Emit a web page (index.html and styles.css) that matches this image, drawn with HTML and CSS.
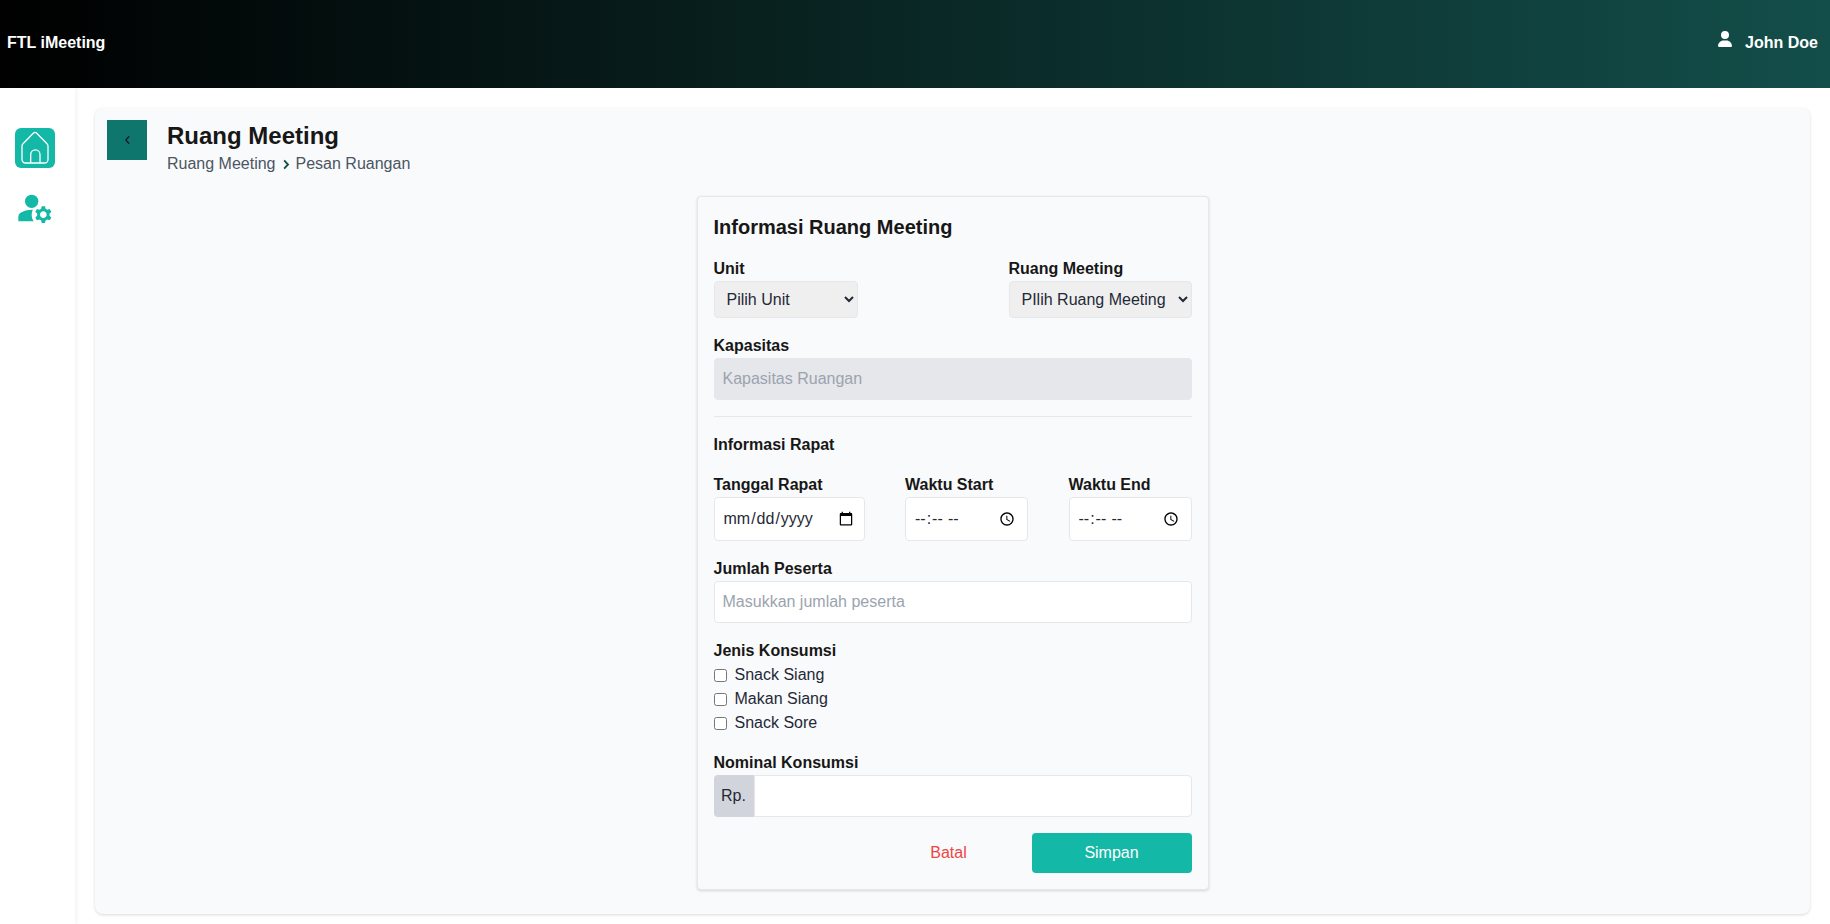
FILE: index.html
```html
<!DOCTYPE html>
<html lang="id">
<head>
    <meta charset="UTF-8">
    <meta name="viewport" content="width=device-width, initial-scale=1.0">
    <title>FTL iMeeting</title>
    <link rel="stylesheet" href="styles.css">
</head>
<body>
    <header class="topbar">
        <div class="brand">FTL iMeeting</div>
        <div class="user">
            <svg class="user-icon" viewBox="0 0 448 512"><path fill="currentColor" d="M224 256A128 128 0 1 0 224 0a128 128 0 1 0 0 256zm-45.7 48C79.8 304 0 383.8 0 482.3C0 498.7 13.3 512 29.7 512H418.3c16.4 0 29.7-13.3 29.7-29.7C448 383.8 368.2 304 269.7 304H178.3z"/></svg>
            <span>John Doe</span>
        </div>
    </header>

    <div class="layout">
        <nav class="sidebar">
            <a class="nav-home" href="#">
                <svg viewBox="0 0 40 40" width="40" height="40" fill="none" stroke="#fff" stroke-width="1.3"><path d="M10.5 35H29.5a3.5 3.5 0 0 0 3.5-3.5V18a3 3 0 0 0-1-2.2L21.5 5a2 2 0 0 0-3 0L8 15.8a3 3 0 0 0-1 2.2V31.5a3.5 3.5 0 0 0 3.5 3.5z"/><path d="M15.7 35V26.5a4.6 4.6 0 0 1 9.3 0V35"/></svg>
            </a>
            <a class="nav-admin" href="#">
                <svg viewBox="0 0 24 24" width="40" height="40"><g fill="currentColor"><circle cx="10" cy="8" r="4"/><path d="M10.67 13.02c-.22-.01-.44-.02-.67-.02-2.42 0-4.68.67-6.61 1.82-.88.52-1.39 1.5-1.39 2.53V20h9.26c-.79-1.13-1.26-2.51-1.26-4 0-1.07.25-2.07.67-2.98z"/><path d="M20.75 16c0-.22-.03-.42-.06-.63l1.14-1.01-1-1.73-1.45.49c-.32-.27-.68-.48-1.08-.63L18 11h-2l-.3 1.49c-.4.15-.76.36-1.08.63l-1.45-.49-1 1.73 1.14 1.01c-.03.21-.06.41-.06.63s.03.42.06.63l-1.14 1.01 1 1.73 1.45-.49c.32.27.68.48 1.08.63L16 21h2l.3-1.49c.4-.15.76-.36 1.08-.63l1.45.49 1-1.73-1.14-1.01c.03-.21.06-.41.06-.63zM17 18c-1.1 0-2-.9-2-2s.9-2 2-2 2 .9 2 2-.9 2-2 2z"/></g></svg>
            </a>
        </nav>

        <main class="content">
            <div class="page-head">
                <a class="back-btn" href="#">
                    <svg viewBox="0 0 8 12" width="7" height="10" fill="none" stroke="#111827" stroke-width="1.5"><path d="M6 1.5 2 6l4 4.5"/></svg>
                </a>
                <div>
                    <h1 class="page-title">Ruang Meeting</h1>
                    <div class="breadcrumb">
                        <span>Ruang Meeting</span>
                        <svg class="crumb-sep" viewBox="0 0 8 12" width="8" height="11" fill="none" stroke="#134e4a" stroke-width="2"><path d="M2 1.5 6.2 6 2 10.5"/></svg>
                        <span>Pesan Ruangan</span>
                    </div>
                </div>
            </div>

            <form class="form-card">
                <h2 class="form-title">Informasi Ruang Meeting</h2>

                <div class="row-between field">
                    <div>
                        <label for="unit">Unit</label>
                        <select id="unit" class="select select-unit">
                            <option>Pilih Unit</option>
                        </select>
                    </div>
                    <div>
                        <label for="ruang">Ruang Meeting</label>
                        <select id="ruang" class="select select-room">
                            <option>PIlih Ruang Meeting</option>
                        </select>
                    </div>
                </div>

                <label for="kapasitas">Kapasitas</label>
                <input id="kapasitas" class="input input-disabled" type="text" placeholder="Kapasitas Ruangan" disabled>

                <hr class="divider">

                <div class="section-title">Informasi Rapat</div>

                <div class="row-between field">
                    <div>
                        <label for="tanggal">Tanggal Rapat</label>
                        <input id="tanggal" class="input input-date" type="date">
                    </div>
                    <div>
                        <label for="start">Waktu Start</label>
                        <input id="start" class="input input-time" type="time">
                    </div>
                    <div>
                        <label for="end">Waktu End</label>
                        <input id="end" class="input input-time" type="time">
                    </div>
                </div>

                <div class="field">
                    <label for="jumlah">Jumlah Peserta</label>
                    <input id="jumlah" class="input" type="text" placeholder="Masukkan jumlah peserta">
                </div>

                <div class="field checks">
                    <label>Jenis Konsumsi</label>
                    <div class="check-row"><input id="k1" type="checkbox"><span>Snack Siang</span></div>
                    <div class="check-row"><input id="k2" type="checkbox"><span>Makan Siang</span></div>
                    <div class="check-row"><input id="k3" type="checkbox"><span>Snack Sore</span></div>
                </div>

                <label for="nominal">Nominal Konsumsi</label>
                <div class="input-group">
                    <span class="addon">Rp.</span>
                    <input id="nominal" class="input" type="text">
                </div>

                <div class="actions">
                    <button type="button" class="btn btn-cancel">Batal</button>
                    <button type="submit" class="btn btn-save">Simpan</button>
                </div>
            </form>
        </main>
    </div>
</body>
</html>
```

FILE: styles.css
```css
* {
    box-sizing: border-box;
}
html, body {
    height: 100%;
}
body {
    margin: 0;
    display: flex;
    flex-direction: column;
    overflow: hidden;
    font-family: "Liberation Sans", Arial, sans-serif;
    font-size: 16px;
    line-height: 24px;
    color: #1f2937;
    background-color: #fff;
}
.topbar {
    flex: none;
    height: 88px;
    padding: 0 12px 2px 7px;
    display: flex;
    align-items: center;
    justify-content: space-between;
    color: #fff;
    font-weight: bold;
    background: linear-gradient(to right, #000, #134e4a);
}
.user {
    display: flex;
    align-items: center;
    gap: 13px;
}
.user-icon {
    width: 14px;
    height: 16px;
    margin-top: -9px;
}
.layout {
    flex: 1;
    display: flex;
    min-height: 0;
}
.sidebar {
    flex: none;
    width: 75px;
    padding: 40px 5px 0 0;
    display: flex;
    flex-direction: column;
    align-items: center;
    box-shadow: 2px 0 4px rgba(0, 0, 0, 0.05);
}
.nav-home {
    width: 40px;
    height: 40px;
    display: block;
    border-radius: 6px;
    background-color: #14b8a6;
}
.nav-home svg {
    display: block;
}
.nav-admin {
    margin-top: 20px;
    display: block;
    color: #14b8a6;
}
.nav-admin svg {
    display: block;
}
.content {
    flex: 1;
    margin: 20px 20px 10px 20px;
    padding: 12px;
    border-radius: 8px;
    background-color: #f9fafb;
    box-shadow: 0 1px 3px rgba(0, 0, 0, 0.15);
}
.page-head {
    display: flex;
    gap: 20px;
    align-items: flex-start;
}
.back-btn {
    width: 40px;
    height: 40px;
    display: flex;
    align-items: center;
    justify-content: center;
    background-color: #0f766e;
}
.page-title {
    margin: 0;
    font-size: 24px;
    line-height: 32px;
    font-weight: bold;
    color: #171717;
}
.breadcrumb {
    display: flex;
    align-items: center;
    color: #4b5563;
}
.crumb-sep {
    margin: 0 6px;
}
.form-card {
    width: 512px;
    margin: 20px auto 0;
    padding: 16px;
    border: 1px solid #e5e7eb;
    border-radius: 4px;
    background-color: #f9fafb;
    box-shadow: 0 1px 3px rgba(0, 0, 0, 0.15);
}
.form-title {
    margin: 0 0 15px;
    font-size: 20px;
    line-height: 28px;
    font-weight: bold;
    color: #171717;
}
label,
.section-title {
    display: block;
    padding-top: 1px;
    font-weight: bold;
    color: #171717;
}
.field {
    margin-bottom: 15px;
}
.row-between {
    display: flex;
    justify-content: space-between;
}
.select {
    display: block;
    height: 37px;
    padding: 0 4px 0 8px;
    font-family: inherit;
    font-size: 16px;
    color: #1f2937;
    border: 1px solid #e5e7eb;
    border-radius: 4px;
    background-color: #efefef;
}
.select-unit {
    width: 144px;
}
.select-room {
    width: 183px;
}
.input {
    display: block;
    width: 100%;
    height: 42px;
    padding: 0 8px;
    font-family: inherit;
    font-size: 16px;
    color: #1f2937;
    border: 1px solid #e5e7eb;
    border-radius: 4px;
    background-color: #fff;
}
.input::placeholder {
    color: #9ca3af;
}
.input-disabled {
    background-color: #e5e7eb;
}
.input-date,
.input-time {
    height: 44px;
}
.input-date {
    width: 151px;
}
.input-time {
    width: 123px;
}
.divider {
    margin: 16px 0 15px;
    border: none;
    border-top: 1px solid #e5e7eb;
}
.section-title {
    margin-bottom: 15px;
}
.check-row {
    display: flex;
    align-items: center;
    height: 24px;
}
.check-row input {
    width: 13px;
    height: 13px;
    margin: 0 8px 0 0;
}
.checks {
    margin-bottom: 15px;
}
.input-group {
    display: flex;
}
.addon {
    flex: none;
    width: 40px;
    height: 42px;
    display: flex;
    align-items: center;
    justify-content: center;
    background-color: #d1d5db;
    border-radius: 4px 0 0 4px;
}
.input-group .input {
    flex: 1;
    border-radius: 0 4px 4px 0;
}
.actions {
    margin-top: 16px;
    display: flex;
    justify-content: flex-end;
    gap: 3px;
}
.btn {
    width: 160px;
    height: 40px;
    padding: 0;
    font-family: inherit;
    font-size: 16px;
    border: none;
    border-radius: 4px;
    cursor: pointer;
}
.btn-cancel {
    color: #ef4444;
    background: transparent;
}
.btn-save {
    color: #fff;
    background-color: #14b8a6;
}
```
